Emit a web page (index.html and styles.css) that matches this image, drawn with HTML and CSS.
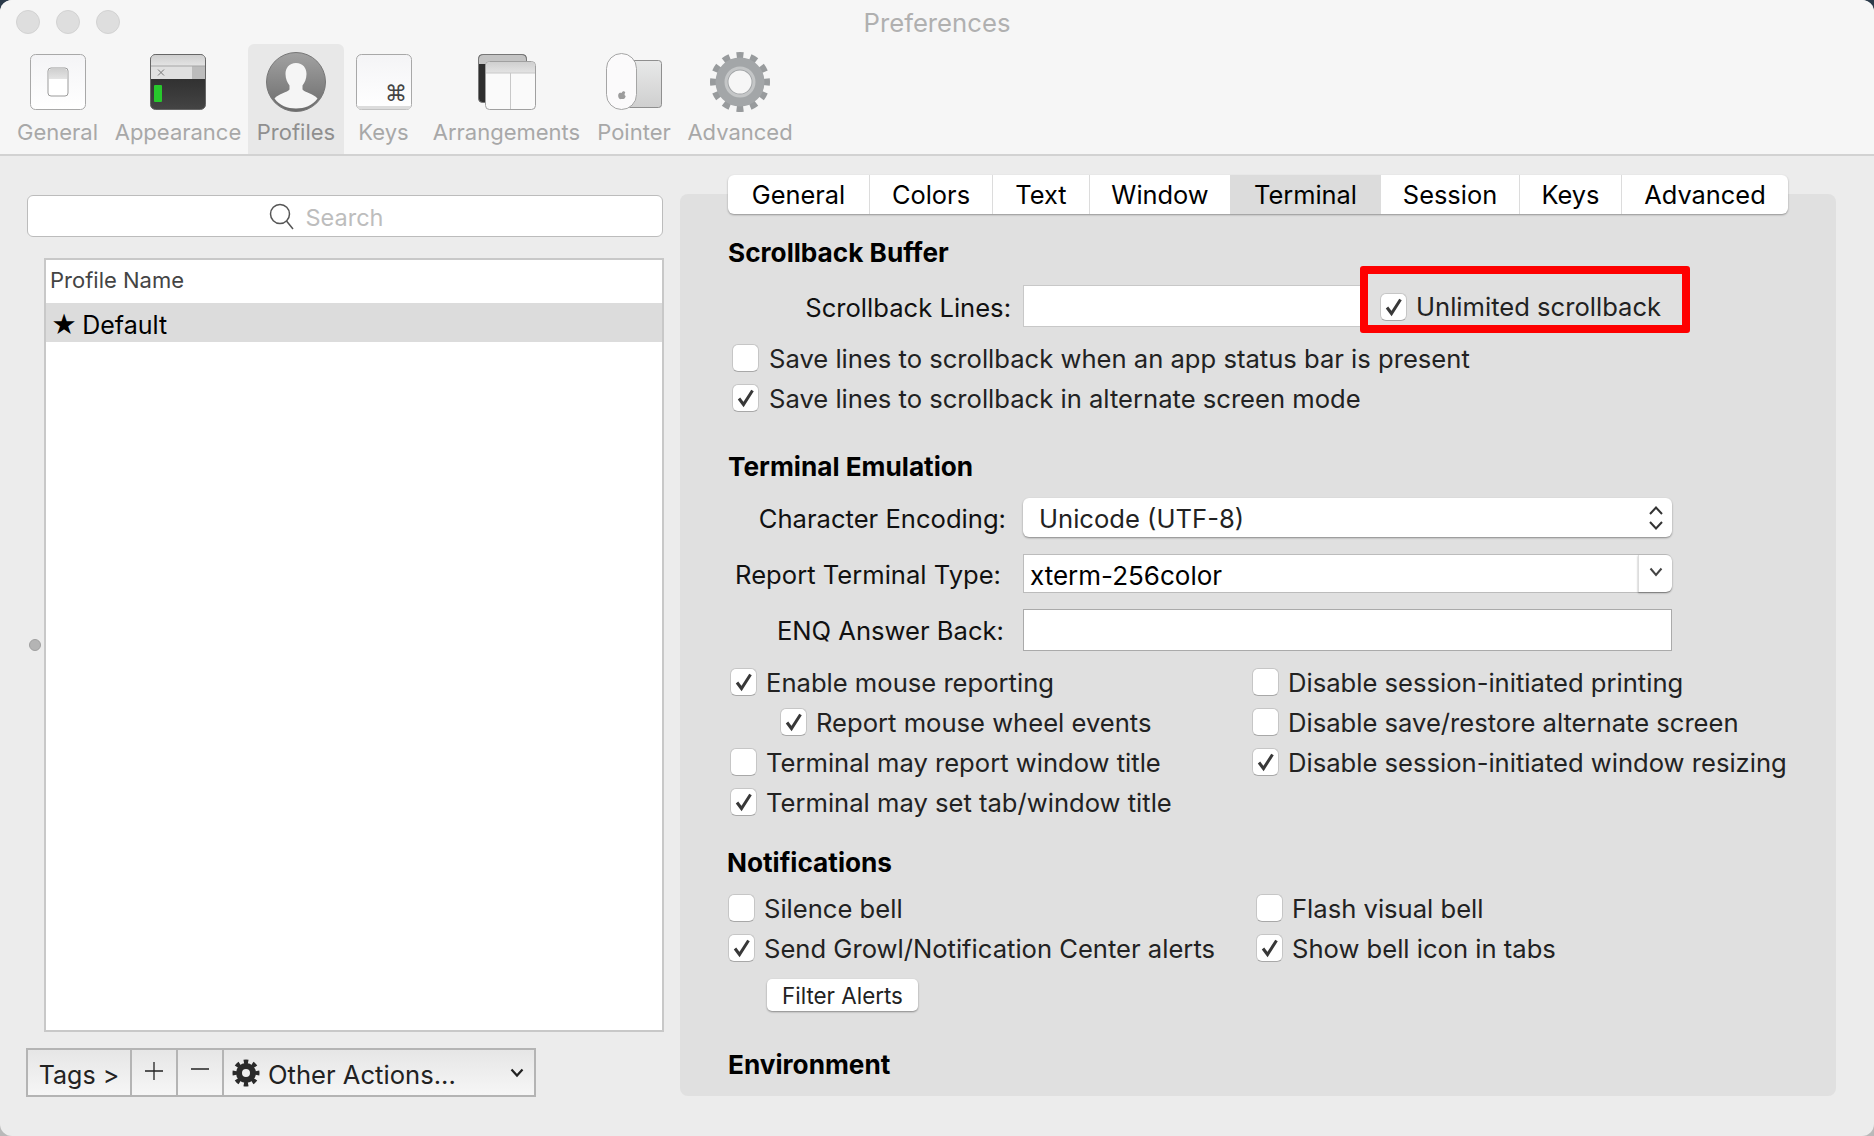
FILE: index.html
```html
<!DOCTYPE html>
<html lang="en">
<head>
    <meta charset="UTF-8">
    <title>Preferences</title>
    <link rel="stylesheet" href="styles.css">
</head>
<body>

<svg class="defs" width="0" height="0">
    <defs>
        <symbol id="check" viewBox="0 0 25 26">
            <path d="M6 13.500 L10.500 19.500 L19.500 5.500" fill="none" stroke="#383838" stroke-width="3"/>
        </symbol>
        <linearGradient id="keyFill" x1="0" y1="0" x2="0" y2="1">
            <stop offset="0" stop-color="#f4f4f6"/>
            <stop offset="1" stop-color="#ffffff"/>
        </linearGradient>
        <linearGradient id="barFill" x1="0" y1="0" x2="0" y2="1">
            <stop offset="0" stop-color="#cfcfcf"/>
            <stop offset="1" stop-color="#e4e4e4"/>
        </linearGradient>
        <linearGradient id="termFill" x1="0" y1="0" x2="0" y2="1">
            <stop offset="0" stop-color="#222"/>
            <stop offset="1" stop-color="#444"/>
        </linearGradient>
        <linearGradient id="userFill" x1="0" y1="0" x2="0" y2="1">
            <stop offset="0" stop-color="#a2a2a2"/>
            <stop offset="1" stop-color="#6c6c6c"/>
        </linearGradient>
        <linearGradient id="padFill" x1="0" y1="0" x2="0" y2="1">
            <stop offset="0" stop-color="#e8e9e9"/>
            <stop offset="1" stop-color="#cfcfcf"/>
        </linearGradient>
    </defs>
</svg>

<div class="window">

    <!-- Верхняя панель -->
    <header class="toolbar">
        <div class="titlebar">
            <div class="lights"><i></i><i></i><i></i></div>
            <div class="title">Preferences</div>
        </div>
        <nav class="tools">
            <div class="tool tool-general">
                <svg width="60" height="60" viewBox="0 0 60 60">
                    <rect x="2.500" y="2.500" width="55" height="55" rx="5" fill="url(#keyFill)" stroke="#a8a8a8"/>
                    <rect x="20" y="16" width="20" height="28" rx="3" fill="#fff" stroke="#9b9b9b"/>
                    <path d="M21 19 a2 2 0 0 1 2-2 h14 a2 2 0 0 1 2 2 v8 h-18z" fill="url(#barFill)"/>
                </svg>
                <span>General</span>
            </div>
            <div class="tool tool-appearance">
                <svg width="60" height="60" viewBox="0 0 60 60">
                    <rect x="2.500" y="2.500" width="55" height="55" rx="5" fill="url(#termFill)" stroke="#666"/>
                    <path d="M3 14 v-7 a4 4 0 0 1 4-4 h46 a4 4 0 0 1 4 4 v7z" fill="url(#barFill)"/>
                    <rect x="3" y="14" width="54" height="13" fill="#e0e0e0"/>
                    <rect x="44" y="14" width="13" height="13" fill="#bcbcbc"/>
                    <path d="M3 14 H57" stroke="#a5a5a5"/>
                    <path d="M10 17.500 l6 6 m0-6 l-6 6" stroke="#777" stroke-width="1"/>
                    <rect x="6" y="33" width="8" height="17" rx="1" fill="#27c82c"/>
                </svg>
                <span>Appearance</span>
            </div>
            <div class="tool tool-profiles">
                <svg width="60" height="60" viewBox="0 0 60 60">
                    <circle cx="30" cy="30" r="29.500" fill="url(#userFill)" stroke="#777"/>
                    <path d="M30 11 c-7 0-10.500 5-10.500 11 c0 5 2 9 4 11.500 v4 c-2 3-11 4-15 9 c5 7 13 10 21.500 10 s16.500-3 21.500-10 c-4-5-13-6-15-9 v-4 c2-2.500 4-6.500 4-11.500 c0-6-3.500-11-10.500-11z" fill="#f5f5f5"/>
                </svg>
                <span>Profiles</span>
            </div>
            <div class="tool tool-keys">
                <svg width="60" height="60" viewBox="0 0 60 60">
                    <rect x="2.500" y="2.500" width="55" height="55" rx="5" fill="url(#keyFill)" stroke="#a8a8a8"/>
                    <path d="M3 54 a4 4 0 0 0 4 3.500 h46 a4 4 0 0 0 4-3.500" fill="#dcdcdc"/>
                    <text x="31" y="49" class="cmd">⌘</text>
                </svg>
                <span>Keys</span>
            </div>
            <div class="tool tool-arrangements">
                <svg width="60" height="60" viewBox="0 0 60 60">
                    <rect x="1.500" y="2.500" width="48" height="48" rx="4" fill="#2e2e2e" stroke="#777"/>
                    <path d="M2 12 v-5 a4 4 0 0 1 4-4 h39 a4 4 0 0 1 4 4 v5z" fill="#c4c4c4"/>
                    <rect x="8.500" y="9.500" width="50" height="48" rx="4" fill="#fafafa" stroke="#a0a0a0"/>
                    <path d="M9 21 v-7 a4 4 0 0 1 4-4 h41 a4 4 0 0 1 4 4 v7z" fill="url(#barFill)"/>
                    <path d="M9 21 H58 M33.500 21 V57" stroke="#c8c8c8"/>
                </svg>
                <span>Arrangements</span>
            </div>
            <div class="tool tool-pointer">
                <svg width="60" height="60" viewBox="0 0 60 60">
                    <rect x="22.500" y="8.500" width="35" height="47" rx="3" fill="url(#padFill)" stroke="#8f8f8f"/>
                    <rect x="2.500" y="1.500" width="30" height="56" rx="15" fill="#fbfafb" stroke="#a5a5a5"/>
                    <path d="M17.500 41 c1-2 2-2 3-1.500 l.8 1 c-1 1-1 3 .4 3.500 c-.5 2-1.700 3.500-2.700 3 h-2 c-2 1-3.500-3-2.500-5 c.8-1.500 2-1.500 3-1z" fill="#9c9c9c"/>
                </svg>
                <span>Pointer</span>
            </div>
            <div class="tool tool-advanced">
                <svg width="60" height="60" viewBox="0 0 60 60">
                    <circle cx="30" cy="30" r="26.500" fill="none" stroke="#989b9d" stroke-width="7" pathLength="120" stroke-dasharray="5 5" stroke-dashoffset="2.500"/>
                    <circle cx="30" cy="30" r="18" fill="none" stroke="#a3a6a8" stroke-width="13"/>
                    <circle cx="30" cy="30" r="14" fill="none" stroke="#c4c6c7" stroke-width="3"/>
                </svg>
                <span>Advanced</span>
            </div>
        </nav>
    </header>

    <main class="content">

        <!-- Список профилей -->
        <section class="profiles">
            <div class="search">
                <svg width="26" height="28" viewBox="0 0 26 28">
                    <circle cx="11" cy="11" r="9.500" fill="none" stroke="#555" stroke-width="1.500"/>
                    <path d="M17.500 18 L24 26" stroke="#555" stroke-width="1.500"/>
                </svg>
                <span>Search</span>
            </div>
            <div class="list">
                <div class="list-head">Profile Name</div>
                <div class="list-row">★ Default</div>
            </div>
            <div class="actions">
                <div class="act act-tags">Tags &gt;</div>
                <div class="act act-sign">
                    <svg width="18" height="18" viewBox="0 0 18 18"><path d="M9 0 V18 M0 9 H18" stroke="#222" stroke-width="1.300"/></svg>
                </div>
                <div class="act act-sign">
                    <svg width="18" height="18" viewBox="0 0 18 18"><path d="M0 7 H22" stroke="#222" stroke-width="1.300"/></svg>
                </div>
                <div class="act act-other">
                    <svg width="28" height="28" viewBox="0 0 28 28">
                        <circle cx="14" cy="14" r="11" fill="none" stroke="#2a2a2a" stroke-width="5" pathLength="80" stroke-dasharray="5 5" stroke-dashoffset="2.500"/>
                        <circle cx="14" cy="14" r="7" fill="none" stroke="#2a2a2a" stroke-width="6"/>
                    </svg>
                    <span>Other Actions...</span>
                    <svg class="chev" width="14" height="10" viewBox="0 0 14 10"><path d="M1.500 1.500 L7 7.500 L12.500 1.500" fill="none" stroke="#222" stroke-width="2.200"/></svg>
                </div>
            </div>
            <i class="splitter"></i>
        </section>

        <!-- Настройки профиля -->
        <section class="panel">
            <div class="tabs">
                <div class="tab tab-1">General</div>
                <div class="tab tab-2">Colors</div>
                <div class="tab tab-3">Text</div>
                <div class="tab tab-4">Window</div>
                <div class="tab tab-5 active">Terminal</div>
                <div class="tab tab-6">Session</div>
                <div class="tab tab-7">Keys</div>
                <div class="tab tab-8">Advanced</div>
            </div>

            <h2 class="heading heading-first">Scrollback Buffer</h2>
            <div class="field field-lines">
                <label class="lbl">Scrollback Lines:</label>
                <div class="input"></div>
                <div class="callout">
                    <div class="check"><span class="cb on"><svg><use href="#check"/></svg></span>Unlimited scrollback</div>
                </div>
            </div>
            <div class="stack">
                <div class="check"><span class="cb"></span>Save lines to scrollback when an app status bar is present</div>
                <div class="check"><span class="cb on"><svg><use href="#check"/></svg></span>Save lines to scrollback in alternate screen mode</div>
            </div>

            <h2 class="heading heading-term">Terminal Emulation</h2>
            <div class="field field-enc">
                <label class="lbl lbl-enc">Character Encoding:</label>
                <div class="select">
                    <span>Unicode (UTF-8)</span>
                    <svg width="16" height="26" viewBox="0 0 16 26"><path d="M2 9 L8 2.500 L14 9 M2 17 L8 23.500 L14 17" fill="none" stroke="#333" stroke-width="2"/></svg>
                </div>
            </div>
            <div class="field field-type">
                <label class="lbl lbl-type">Report Terminal Type:</label>
                <div class="combo">
                    <span>xterm-256color</span>
                    <div class="combo-btn"><svg width="14" height="10" viewBox="0 0 14 10"><path d="M1.500 1.500 L7 8 L12.500 1.500" fill="none" stroke="#444" stroke-width="2"/></svg></div>
                </div>
            </div>
            <div class="field field-enq">
                <label class="lbl lbl-enq">ENQ Answer Back:</label>
                <div class="input input-enq"></div>
            </div>

            <div class="options options-term">
                <div class="check"><span class="cb on"><svg><use href="#check"/></svg></span>Enable mouse reporting</div>
                <div class="check"><span class="cb"></span>Disable session-initiated printing</div>
                <div class="check check-sub"><span class="cb on"><svg><use href="#check"/></svg></span>Report mouse wheel events</div>
                <div class="check"><span class="cb"></span>Disable save/restore alternate screen</div>
                <div class="check"><span class="cb"></span>Terminal may report window title</div>
                <div class="check"><span class="cb on"><svg><use href="#check"/></svg></span>Disable session-initiated window resizing</div>
                <div class="check"><span class="cb on"><svg><use href="#check"/></svg></span>Terminal may set tab/window title</div>
            </div>

            <h2 class="heading heading-notif">Notifications</h2>
            <div class="options options-notif">
                <div class="check"><span class="cb"></span>Silence bell</div>
                <div class="check"><span class="cb"></span>Flash visual bell</div>
                <div class="check"><span class="cb on"><svg><use href="#check"/></svg></span>Send Growl/Notification Center alerts</div>
                <div class="check"><span class="cb on"><svg><use href="#check"/></svg></span>Show bell icon in tabs</div>
            </div>
            <button class="button">Filter Alerts</button>

            <h2 class="heading heading-env">Environment</h2>
        </section>
    </main>
</div>

</body>
</html>
```

FILE: styles.css
```css
* {
    box-sizing: border-box;
}
html, body {
    margin: 0;
    height: 100%;
    overflow: hidden;
    background: linear-gradient(#2b3a4a 50%, #b9b9b9 50%);
}
body {
    font-family: Inter, "Noto Sans", sans-serif;
    font-size: 25.6px;
    color: #222;
}
.defs {
    position: absolute;
}
.window {
    width: 1874px;
    height: 1136px;
    background-color: #ececec;
    border-radius: 12px;
    overflow: hidden;
}

/* Верхняя панель */
.toolbar {
    height: 156px;
    background-color: #f6f6f6;
    border-bottom: 2px solid #d2d2d2;
}
.titlebar {
    height: 44px;
    display: flex;
    align-items: center;
    padding-left: 16px;
    position: relative;
}
.lights {
    display: flex;
    gap: 16px;
}
.lights i {
    width: 24px;
    height: 24px;
    border-radius: 50%;
    background-color: #dedede;
    border: 1px solid #d2d2d2;
}
.title {
    position: absolute;
    left: 0;
    right: 0;
    text-align: center;
    color: #b0b0b0;
    font-size: 25.7px;
}
.tools {
    display: flex;
    padding-left: 7px;
    height: 110px;
    font-size: 22px;
}
.tool {
    display: flex;
    flex-direction: column;
    align-items: center;
    color: #a8a8a8;
    padding-top: 8px;
    border-radius: 6px 6px 0 0;
}
.tool svg {
    display: block;
    height: 60px;
    flex: none;
}
.tool span {
    margin-top: 5px;
    line-height: 30px;
    white-space: nowrap;
}
.tool-general { width: 101px; }
.tool-appearance { width: 140px; }
.tool-profiles {
    width: 96px;
    background-color: #e8e8e8;
    color: #8f8f8f;
}
.tool-keys { width: 79px; }
.tool-arrangements { width: 167px; }
.tool-pointer { width: 88px; }
.tool-advanced { width: 124px; }
.cmd {
    font-family: "DejaVu Sans", sans-serif;
    font-size: 22px;
    fill: #444;
}

/* Основная часть */
.content {
    display: flex;
    height: 980px;
}
.profiles {
    width: 680px;
    flex: none;
    padding: 39px 0 0 27px;
    position: relative;
}
.search {
    width: 636px;
    height: 42px;
    background-color: #fff;
    border: 1px solid #bcbcbc;
    border-radius: 6px;
    display: flex;
    align-items: center;
    justify-content: center;
    gap: 11px;
    padding: 2px 38px 0 0;
    color: #bdbdbd;
    font-size: 23.5px;
}
.list {
    margin: 21px 0 0 17px;
    width: 620px;
    height: 774px;
    background-color: #fff;
    border: 2px solid #c8c8c8;
}
.list-head {
    height: 43px;
    line-height: 41px;
    padding-left: 4px;
    font-size: 22px;
    color: #444;
}
.list-row {
    height: 39px;
    line-height: 44px;
    background-color: #dcdcdc;
    padding-left: 5px;
    font-size: 25px;
    word-spacing: -2px;
    color: #000;
}
.actions {
    display: flex;
    margin: 16px 0 0 -1px;
    width: 510px;
    height: 49px;
    border: 2px solid #b4b4b4;
    background: linear-gradient(#e6e6e6, #f6f6f6);
}
.act {
    display: flex;
    align-items: center;
    justify-content: center;
    border-right: 2px solid #b4b4b4;
    padding-top: 4px;
}
.act-tags { width: 104px; font-size: 25px; }
.act-sign { width: 46px; padding: 0 0 4px; }
.act-other {
    flex: 1;
    border-right: none;
    justify-content: flex-start;
    padding-left: 8px;
    gap: 8px;
}
.act-other svg { margin-top: -4px; }
.chev {
    margin-left: auto;
    margin-right: 10px;
}
.splitter {
    position: absolute;
    left: 29px;
    top: 483px;
    width: 12px;
    height: 12px;
    border-radius: 50%;
    background-color: #b4b4b4;
    border: 1px solid #a0a0a0;
}

/* Панель с вкладками */
.panel {
    width: 1156px;
    height: 902px;
    margin-top: 38px;
    padding-left: 47px;
    background-color: #e0e0e0;
    border-radius: 8px;
}
.tabs {
    display: flex;
    width: 1060px;
    height: 39px;
    margin: -19px 0 0 1px;
    background-color: #fff;
    border-radius: 6px;
    box-shadow: 0 1px 2px rgba(0, 0, 0, 0.35);
    font-size: 25.4px;
    color: #000;
    overflow: hidden;
}
.tab {
    display: flex;
    align-items: center;
    justify-content: center;
    border-right: 1px solid #dcdcdc;
}
.tab.active { background-color: #dcdcdc; }
.tab-1 { width: 142px; }
.tab-2 { width: 123px; }
.tab-3 { width: 97px; }
.tab-4 { width: 141px; }
.tab-5 { width: 150px; }
.tab-6 { width: 139px; }
.tab-7 { width: 102px; }
.tab-8 { flex: 1; border-right: none; }

.heading {
    margin: 0;
    height: 30px;
    line-height: 30px;
    font-size: 26.2px;
    font-weight: 700;
    color: #000;
}
.heading-first { margin: 24px 0 0 1px; }
.heading-term { margin: 40px 0 0 1px; }
.heading-notif { margin: 32px 0 0 0; }
.heading-env { margin: 39px 0 0 1px; }

.field {
    display: flex;
    align-items: center;
    position: relative;
}
.field-lines { margin-top: 17px; height: 42px; }
.field-enc { margin-top: 16px; height: 39px; }
.field-type { margin-top: 17px; height: 39px; }
.field-enq { margin-top: 16px; height: 42px; }
.lbl {
    width: 296px;
    padding: 3px 12px 0 0;
    text-align: right;
    white-space: nowrap;
    color: #111;
}
.lbl-enc { padding: 2px 17px 0 0; }
.lbl-type { padding: 2px 22px 0 0; }
.lbl-enq { padding: 0 19px 0 0; }
.input {
    width: 400px;
    height: 42px;
    background-color: #fff;
    border: 1px solid #c8c8c8;
}
.input-enq {
    width: 649px;
    border-color: #aaa;
}
.callout {
    position: absolute;
    left: 633px;
    top: -19px;
    width: 330px;
    height: 67px;
    border: 8px solid #fe0000;
    border-radius: 3px;
    background-color: #e0e0e0;
    display: flex;
    align-items: center;
    padding: 14px 0 0 12px;
}
.stack {
    display: flex;
    flex-direction: column;
    gap: 12px;
    margin: 17px 0 0 5px;
}
.check {
    display: flex;
    align-items: center;
    height: 28px;
    gap: 9px;
    white-space: nowrap;
}
.stack .check { gap: 10px; }
.check-sub { margin-left: 50px; }
.cb {
    width: 27px;
    height: 28px;
    flex: none;
    background-color: #fff;
    border: 1px solid #c6c6c6;
    border-bottom-color: #a8a8a8;
    border-radius: 6px;
    position: relative;
}
.cb svg {
    display: block;
    width: 25px;
    height: 26px;
}
.select {
    width: 649px;
    height: 39px;
    background-color: #fff;
    border-radius: 6px;
    box-shadow: 0 1px 2px rgba(0, 0, 0, 0.4);
    display: flex;
    align-items: center;
    justify-content: space-between;
    padding: 0 8px 0 16px;
}
.select span { padding-top: 2px; }
.combo {
    width: 649px;
    height: 39px;
    background-color: #fff;
    border: 1px solid #bcbcbc;
    border-right: none;
    border-radius: 0 6px 6px 0;
    display: flex;
    align-items: center;
    justify-content: space-between;
    padding-left: 6px;
    font-size: 26px;
    color: #000;
}
.combo span { padding-top: 4px; }
.combo-btn {
    width: 34px;
    height: 100%;
    border-left: 1px solid #ddd;
    border-radius: 0 6px 6px 0;
    box-shadow: 0 1px 2px rgba(0, 0, 0, 0.4);
    display: flex;
    align-items: center;
    justify-content: center;
    padding-bottom: 3px;
}
.options {
    display: grid;
    row-gap: 12px;
}
.options-term {
    grid-template-columns: 522px 1fr;
    margin: 17px 0 0 3px;
}
.options-notif {
    grid-template-columns: 528px 1fr;
    margin: 16px 0 0 1px;
}
.button {
    display: block;
    width: 151px;
    height: 32px;
    margin: 17px 0 0 40px;
    padding: 0;
    background-color: #fff;
    border: none;
    border-radius: 5px;
    box-shadow: 0 1px 2px rgba(0, 0, 0, 0.4);
    font-family: Inter, "Noto Sans", sans-serif;
    font-size: 22.4px;
    color: #222;
}
```
